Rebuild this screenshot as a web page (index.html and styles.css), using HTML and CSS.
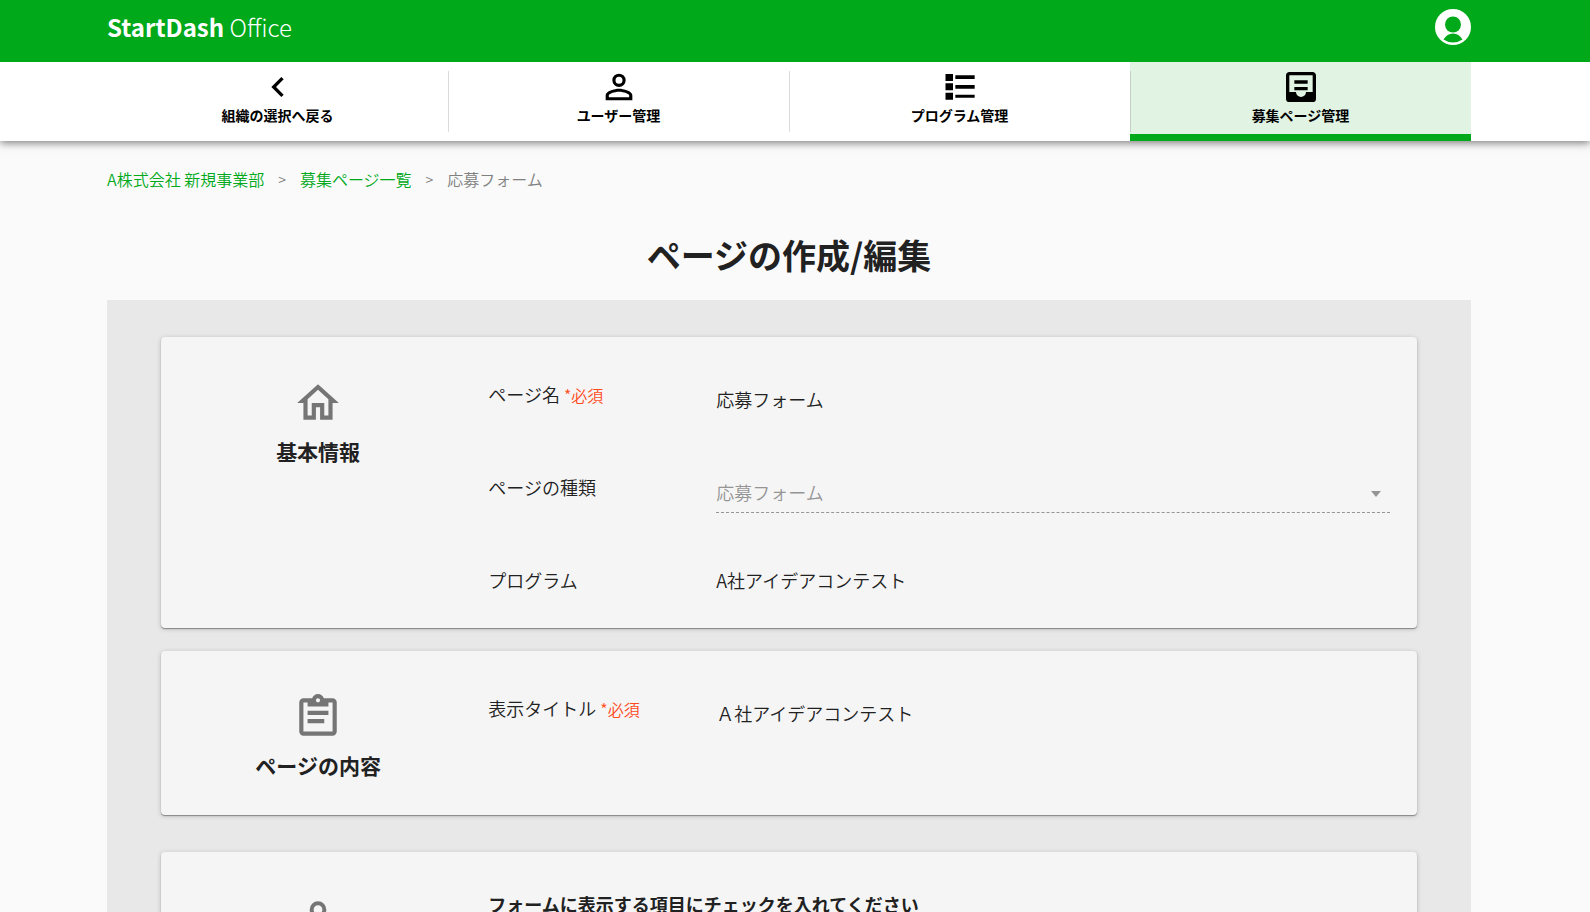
FILE: index.html
```html
<!DOCTYPE html>
<html lang="ja">
<head>
<meta charset="utf-8">
<title>ページの作成/編集 - StartDash Office</title>
<link rel="stylesheet" href="styles.css">
</head>
<body>
<header class="topbar">
  <a class="logo" href="#"><b>StartDash</b> <span class="logo-sub">Office</span></a>
  <button class="account" type="button" aria-label="アカウント">
    <svg viewBox="0 0 36 36"><circle cx="18" cy="18" r="18" fill="#fff"/><circle cx="18" cy="15.500" r="8" fill="#00a91a"/><path d="M8.500 30.500Q12 24.500 18 24.500T27.500 30.500Q23 33.500 18 33.500T8.500 30.500Z" fill="#00a91a"/></svg>
  </button>
</header>
<nav class="nav">
  <a class="nav-item" href="#"><svg viewBox="0 0 24 24"><path d="M15.410 16.580L10.830 12l4.580-4.590L14 6l-6 6 6 6z"/></svg><span>組織の選択へ戻る</span></a>
  <a class="nav-item" href="#"><svg viewBox="0 0 24 24"><path d="M12 4a4 4 0 0 1 4 4 4 4 0 0 1-4 4 4 4 0 0 1-4-4 4 4 0 0 1 4-4m0 1.900A2.100 2.100 0 0 0 9.900 8a2.100 2.100 0 0 0 2.100 2.100A2.100 2.100 0 0 0 14.100 8 2.100 2.100 0 0 0 12 5.900M12 13c2.670 0 8 1.330 8 4v3H4v-3c0-2.670 5.330-4 8-4m0 1.900c-2.970 0-6.100 1.460-6.100 2.100v1.100h12.200V17c0-.640-3.130-2.100-6.100-2.100z"/></svg><span>ユーザー管理</span></a>
  <a class="nav-item" href="#"><svg viewBox="0 0 24 24"><path d="M3.300 4.200h4.500v4.200H3.300zM3.300 9.800h4.500V14H3.300zM3.300 15.400h4.500v4.200H3.300zM9.200 5h11.600v2.200H9.200zM9.200 10.800h11.600V13H9.200zM9.200 16.600h11.600v1.900H9.200z"/></svg><span>プログラム管理</span></a>
  <a class="nav-item active" href="#" aria-current="page"><svg viewBox="0 0 24 24"><path d="M16 10H8V8h8v2m0 4H8v-2h8v2m3 1V5H5v10h4a3 3 0 0 0 3 3 3 3 0 0 0 3-3h4m0-12c1.100 0 2 .9 2 2v14a2 2 0 0 1-2 2H5a2 2 0 0 1-2-2V5c0-1.100.890-2 2-2h14z"/></svg><span>募集ページ管理</span></a>
</nav>
<main class="main">
  <div class="crumbs">
    <a href="#">A株式会社 新規事業部</a><span class="sep">&gt;</span><a href="#">募集ページ一覧</a><span class="sep">&gt;</span><span class="here">応募フォーム</span>
  </div>
  <h1 class="title">ページの作成/編集</h1>
  <form class="panel">
    <section class="card">
      <div class="side">
        <svg viewBox="0 0 24 24"><path d="M12 5.690l5 4.500V18h-2v-6H9v6H7v-7.810l5-4.500M12 3L2 12h3v8h6v-6h2v6h6v-8h3L12 3z"/></svg>
        <h2>基本情報</h2>
      </div>
      <div class="fields">
        <div class="row">
          <label for="name">ページ名 <em>*必須</em></label>
          <input id="name" type="text" value="応募フォーム">
        </div>
        <div class="row">
          <label for="kind">ページの種類</label>
          <div class="select">
            <select id="kind" disabled><option>応募フォーム</option></select>
          </div>
        </div>
        <div class="row">
          <span class="label">プログラム</span>
          <span class="value">A社アイデアコンテスト</span>
        </div>
      </div>
    </section>
    <section class="card">
      <div class="side">
        <svg viewBox="0 0 24 24"><path d="M19 3h-4.180C14.400 1.840 13.300 1 12 1s-2.400.840-2.820 2H5a2 2 0 0 0-2 2v14a2 2 0 0 0 2 2h14a2 2 0 0 0 2-2V5a2 2 0 0 0-2-2m-7 0a1 1 0 0 1 1 1 1 1 0 0 1-1 1 1 1 0 0 1-1-1 1 1 0 0 1 1-1M7 7h10V5h2v14H5V5h2v2m10 4H7V9h10v2m-2 4H7v-2h8v2z"/></svg>
        <h2>ページの内容</h2>
      </div>
      <div class="fields">
        <div class="row">
          <label for="heading">表示タイトル <em>*必須</em></label>
          <input id="heading" type="text" value="Ａ社アイデアコンテスト">
        </div>
      </div>
    </section>
    <section class="card card-items">
      <div class="side">
        <svg viewBox="0 0 24 24"><path d="M12 4a4 4 0 0 1 4 4 4 4 0 0 1-4 4 4 4 0 0 1-4-4 4 4 0 0 1 4-4m0 1.900A2.100 2.100 0 0 0 9.900 8a2.100 2.100 0 0 0 2.100 2.100A2.100 2.100 0 0 0 14.100 8 2.100 2.100 0 0 0 12 5.900M12 13c2.670 0 8 1.330 8 4v3H4v-3c0-2.670 5.330-4 8-4m0 1.900c-2.970 0-6.100 1.460-6.100 2.100v1.100h12.200V17c0-.640-3.130-2.100-6.100-2.100z"/></svg>
      </div>
      <div class="fields">
        <p class="lead">フォームに表示する項目にチェックを入れてください</p>
      </div>
    </section>
  </form>
</main>
</body>
</html>
```
FILE: styles.css
```css
* { box-sizing: border-box; }

body {
  margin: 0;
  height: 100vh;
  overflow: hidden;
  background: #fafafa;
  color: #212121;
  font: 350 18px/28px "Noto Sans CJK JP", sans-serif;
}

a { text-decoration: none; }

.topbar, .nav, .main {
  padding-left: 107px;
  padding-right: 119px;
}

.topbar {
  height: 62px;
  display: flex;
  justify-content: space-between;
  align-items: center;
  background: #00a91a;
}

.logo {
  color: #fff;
  font-size: 24px;
  line-height: 32px;
  padding-bottom: 8px;
}
.logo b { font-weight: 700; }
.logo-sub { font-weight: 300; }

.account {
  width: 36px;
  height: 36px;
  padding: 0;
  border: 0;
  background: none;
  margin-bottom: 8px;
}
.account svg { display: block; }

.nav {
  position: relative;
  display: grid;
  grid-template-columns: repeat(4, 1fr);
  height: 79px;
  background: #fff;
  box-shadow: 0 2px 8px rgba(0, 0, 0, .5);
  clip-path: inset(0 0 -16px 0);
}

.nav-item {
  position: relative;
  display: flex;
  flex-direction: column;
  align-items: center;
  padding-top: 5px;
  color: #000;
  font-size: 14px;
  font-weight: 700;
  line-height: 16px;
}
.nav-item svg { width: 40px; height: 40px; }
.nav-item + .nav-item::before {
  content: "";
  position: absolute;
  left: 0;
  top: 9px;
  bottom: 9px;
  border-left: 1px solid rgba(0, 0, 0, .14);
}
.nav-item.active {
  background: #e1f4e3;
  border-bottom: 7px solid #00a91a;
}
.nav-item.active::before { bottom: 2px; }

.crumbs {
  display: flex;
  align-items: center;
  padding-top: 26px;
  font-size: 16px;
  line-height: 24px;
  color: #808080;
}
.crumbs a { color: #00a91a; }
.sep { padding: 0 14px; font-size: 14px; }

.title {
  margin: 38px 0 20px;
  font-size: 34px;
  line-height: 51px;
  font-weight: 700;
  text-align: center;
}

.panel {
  padding: 37px 54px 60px;
  background: #e8e8e8;
}

.card {
  display: grid;
  grid-template-columns: 25% 1fr;
  min-height: 164px;
  margin-bottom: 23px;
  padding-right: 27px;
  border-radius: 4px;
  background: #f5f5f5;
  box-shadow: 0 1px 1px #888, 0 1px 5px rgba(0, 0, 0, .2);
}
.card-items { margin-top: 37px; min-height: 300px; }

.side {
  display: flex;
  flex-direction: column;
  align-items: center;
  margin-right: -27px;
  padding: 41px 20px 0 0;
}
.side svg { width: 50px; height: 50px; fill: #757575; }
.side h2 {
  margin: 7px 0 0;
  font-size: 21px;
  line-height: 32px;
  font-weight: 700;
}

.fields { padding: 37px 0 0 20px; }

.row {
  display: grid;
  grid-template-columns: 228px 1fr;
  align-items: start;
  padding-top: 6px;
  min-height: 93px;
}
.row:last-child { min-height: 68px; }

em {
  font-style: normal;
  font-size: 16px;
  color: #ff4a1c;
}

input, select {
  width: 100%;
  height: 38px;
  padding: 0;
  border: 0;
  outline: 0;
  background: none;
  color: inherit;
  font: inherit;
  appearance: none;
}

.select {
  position: relative;
  padding-bottom: 1px;
  border-bottom: 1px dashed #959595;
}
.select::after {
  content: "";
  position: absolute;
  right: 9px;
  top: 18px;
  border: 5px solid transparent;
  border-top: 6px solid #959595;
  border-bottom: 0;
}
select:disabled { color: #959595; opacity: 1; }

.lead { margin: 1px 0 0; font-weight: 700; }
```
